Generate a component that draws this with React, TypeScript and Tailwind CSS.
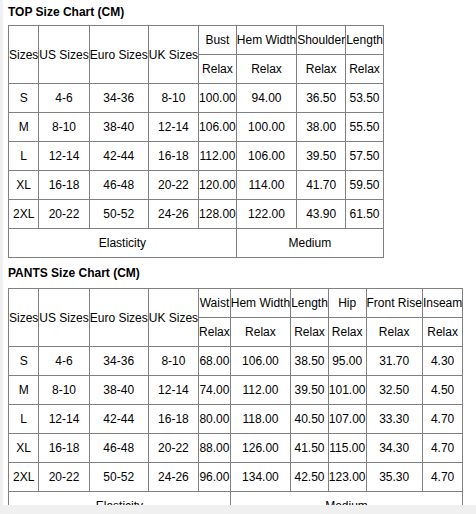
import React from "react";

const cell = "border border-[#808080] p-0 text-center align-middle font-normal whitespace-nowrap";

const topRows = [
  ["S", "4-6", "34-36", "8-10", "100.00", "94.00", "36.50", "53.50"],
  ["M", "8-10", "38-40", "12-14", "106.00", "100.00", "38.00", "55.50"],
  ["L", "12-14", "42-44", "16-18", "112.00", "106.00", "39.50", "57.50"],
  ["XL", "16-18", "46-48", "20-22", "120.00", "114.00", "41.70", "59.50"],
  ["2XL", "20-22", "50-52", "24-26", "128.00", "122.00", "43.90", "61.50"],
];

const pantsRows = [
  ["S", "4-6", "34-36", "8-10", "68.00", "106.00", "38.50", "95.00", "31.70", "4.30"],
  ["M", "8-10", "38-40", "12-14", "74.00", "112.00", "39.50", "101.00", "32.50", "4.50"],
  ["L", "12-14", "42-44", "16-18", "80.00", "118.00", "40.50", "107.00", "33.30", "4.70"],
  ["XL", "16-18", "46-48", "20-22", "88.00", "126.00", "41.50", "115.00", "34.30", "4.70"],
  ["2XL", "20-22", "50-52", "24-26", "96.00", "134.00", "42.50", "123.00", "35.30", "4.70"],
];

const SizeTable = ({ measures, rows, elasticSpan, mediumSpan }: { measures: string[]; rows: string[][]; elasticSpan: number; mediumSpan: number }) => (
  <table className="border-collapse border border-[#808080] text-[12px] leading-[14px] text-black">
    <tbody>
      <tr className="h-[29px]">
        {["Sizes", "US Sizes", "Euro Sizes", "UK Sizes"].map((h) => (
          <th key={h} rowSpan={2} className={cell}>
            {h}
          </th>
        ))}
        {measures.map((m) => (
          <th key={m} className={cell}>
            {m}
          </th>
        ))}
      </tr>
      <tr className="h-[29px]">
        {measures.map((m) => (
          <td key={m} className={cell}>
            Relax
          </td>
        ))}
      </tr>
      {rows.map((r) => (
        <tr key={r[0]} className="h-[29px]">
          {r.map((v, i) => (
            <td key={i} className={cell}>
              {v}
            </td>
          ))}
        </tr>
      ))}
      <tr className="h-[29px]">
        <td colSpan={elasticSpan} className={cell}>
          Elasticity
        </td>
        <td colSpan={mediumSpan} className={cell}>
          Medium
        </td>
      </tr>
    </tbody>
  </table>
);

export default function App() {
  return (
    <div className="h-[514px] w-[476px] overflow-hidden bg-[#f0f0f0] font-['Liberation_Sans',Arial,sans-serif]">
      <div className="ml-[3px] h-[505px] overflow-hidden bg-white pl-[5px] pt-[5px]">
        <div className="text-[12px] font-bold leading-[14px] text-black">TOP Size Chart (CM)</div>
        <div className="mt-[6px]">
          <SizeTable measures={["Bust", "Hem Width", "Shoulder", "Length"]} rows={topRows} elasticSpan={5} mediumSpan={3} />
        </div>
        <div className="mt-[8px] text-[12px] font-bold leading-[14px] text-black">PANTS Size Chart (CM)</div>
        <div className="mt-[8px]">
          <SizeTable measures={["Waist", "Hem Width", "Length", "Hip", "Front Rise", "Inseam"]} rows={pantsRows} elasticSpan={5} mediumSpan={5} />
        </div>
      </div>
    </div>
  );
}
